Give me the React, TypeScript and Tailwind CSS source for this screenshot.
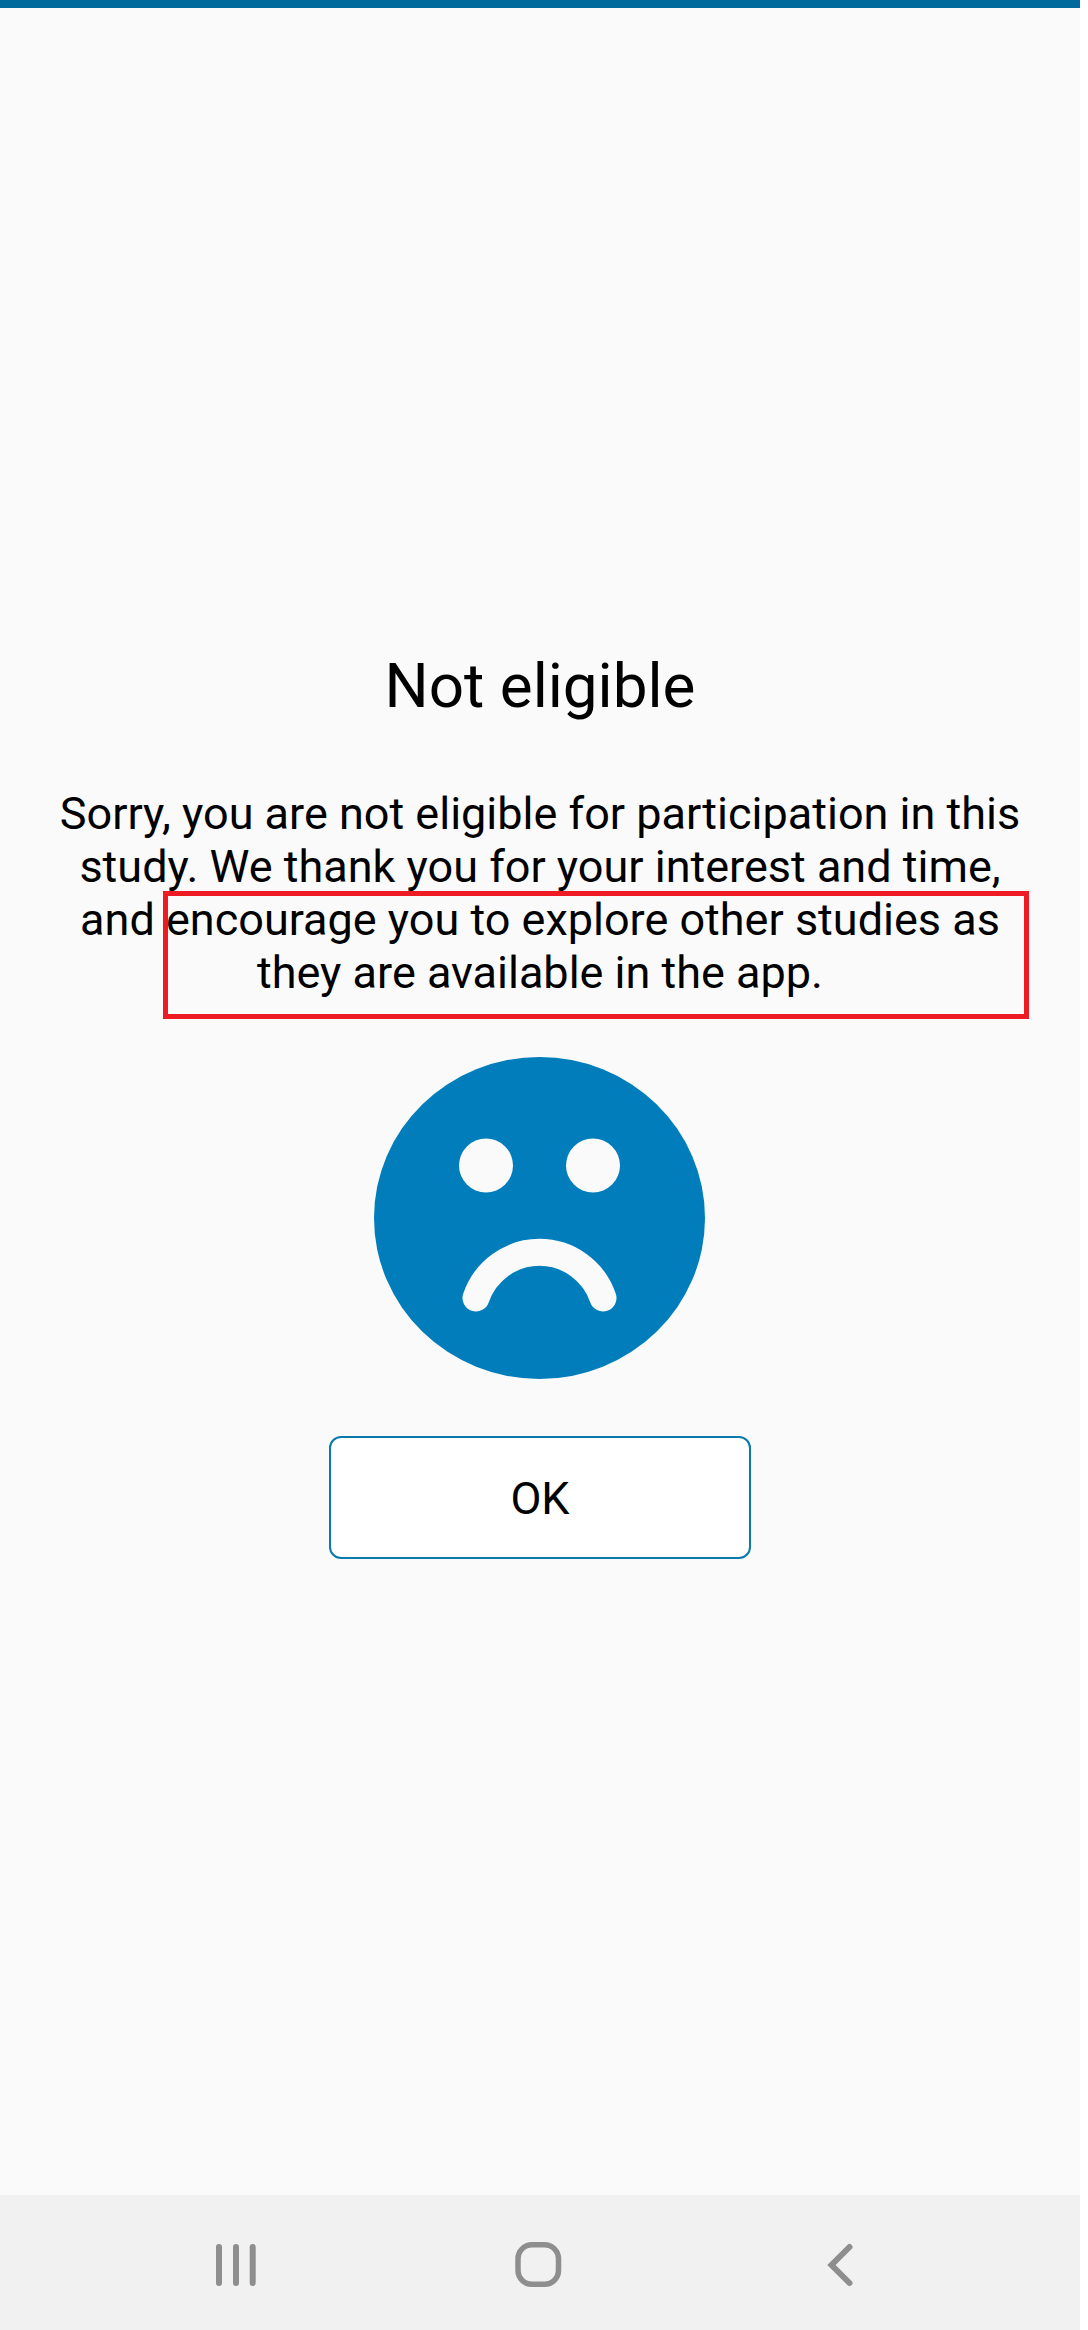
import React from 'react';

const font = { fontFamily: 'Roboto, sans-serif' };

const SadFace = () => (
  <svg width="331" height="322" viewBox="0 0 331 322" className="block">
    <ellipse cx="165.5" cy="161" rx="165.5" ry="161" fill="#007dba" />
    <circle cx="112" cy="108.5" r="27" fill="#fafafa" />
    <circle cx="219" cy="108.5" r="27" fill="#fafafa" />
    <path d="M102 241 A67 67 0 0 1 229 241" fill="none" stroke="#fafafa" strokeWidth="27" strokeLinecap="round" />
  </svg>
);

const NavBar = () => (
  <div className="h-[135px] w-full bg-[#f1f1f1]">
    <svg width="1080" height="135" viewBox="0 0 1080 135" className="block">
      <g fill="none" stroke="#8e8e8e" strokeWidth="6" strokeLinecap="round" strokeLinejoin="miter">
        <path d="M219 52V88M236 52V88M252.7 52V88" />
        <rect x="518" y="49.8" width="40.5" height="39.5" rx="14" strokeWidth="5.5" />
        <path d="M849.5 52L831.5 70L849.5 88" />
      </g>
    </svg>
  </div>
);

export default function App() {
  return (
    <div className="relative h-[2330px] w-[1088px] overflow-hidden bg-white" style={font}>
      <div className="flex h-full w-[1080px] flex-col bg-[#fafafa]">
        <div className="h-2 w-full bg-[#006a9c]" />
        <main className="flex flex-1 flex-col items-center pt-[642px] text-black">
          <h1 className="text-[62px] leading-[72px] font-normal">Not eligible</h1>
          <p className="mt-[65px] w-[1000px] text-center text-[45px] leading-[53px]">
            Sorry, you are not eligible for participation in this study. We thank you for your interest and time, and encourage you to explore other studies as they are available in the app.
          </p>
          <div className="mt-[58px] mr-[1px]">
            <SadFace />
          </div>
          <button className="mt-[57px] flex h-[123px] w-[422px] items-center justify-center rounded-xl border-2 border-[#0a7aad] bg-white pt-[3px] text-[45px] text-black">
            OK
          </button>
        </main>
        <NavBar />
      </div>
      <div className="absolute top-[891px] left-[163px] h-[128px] w-[866px] border-[5px] border-[#ed1c24]" />
    </div>
  );
}
